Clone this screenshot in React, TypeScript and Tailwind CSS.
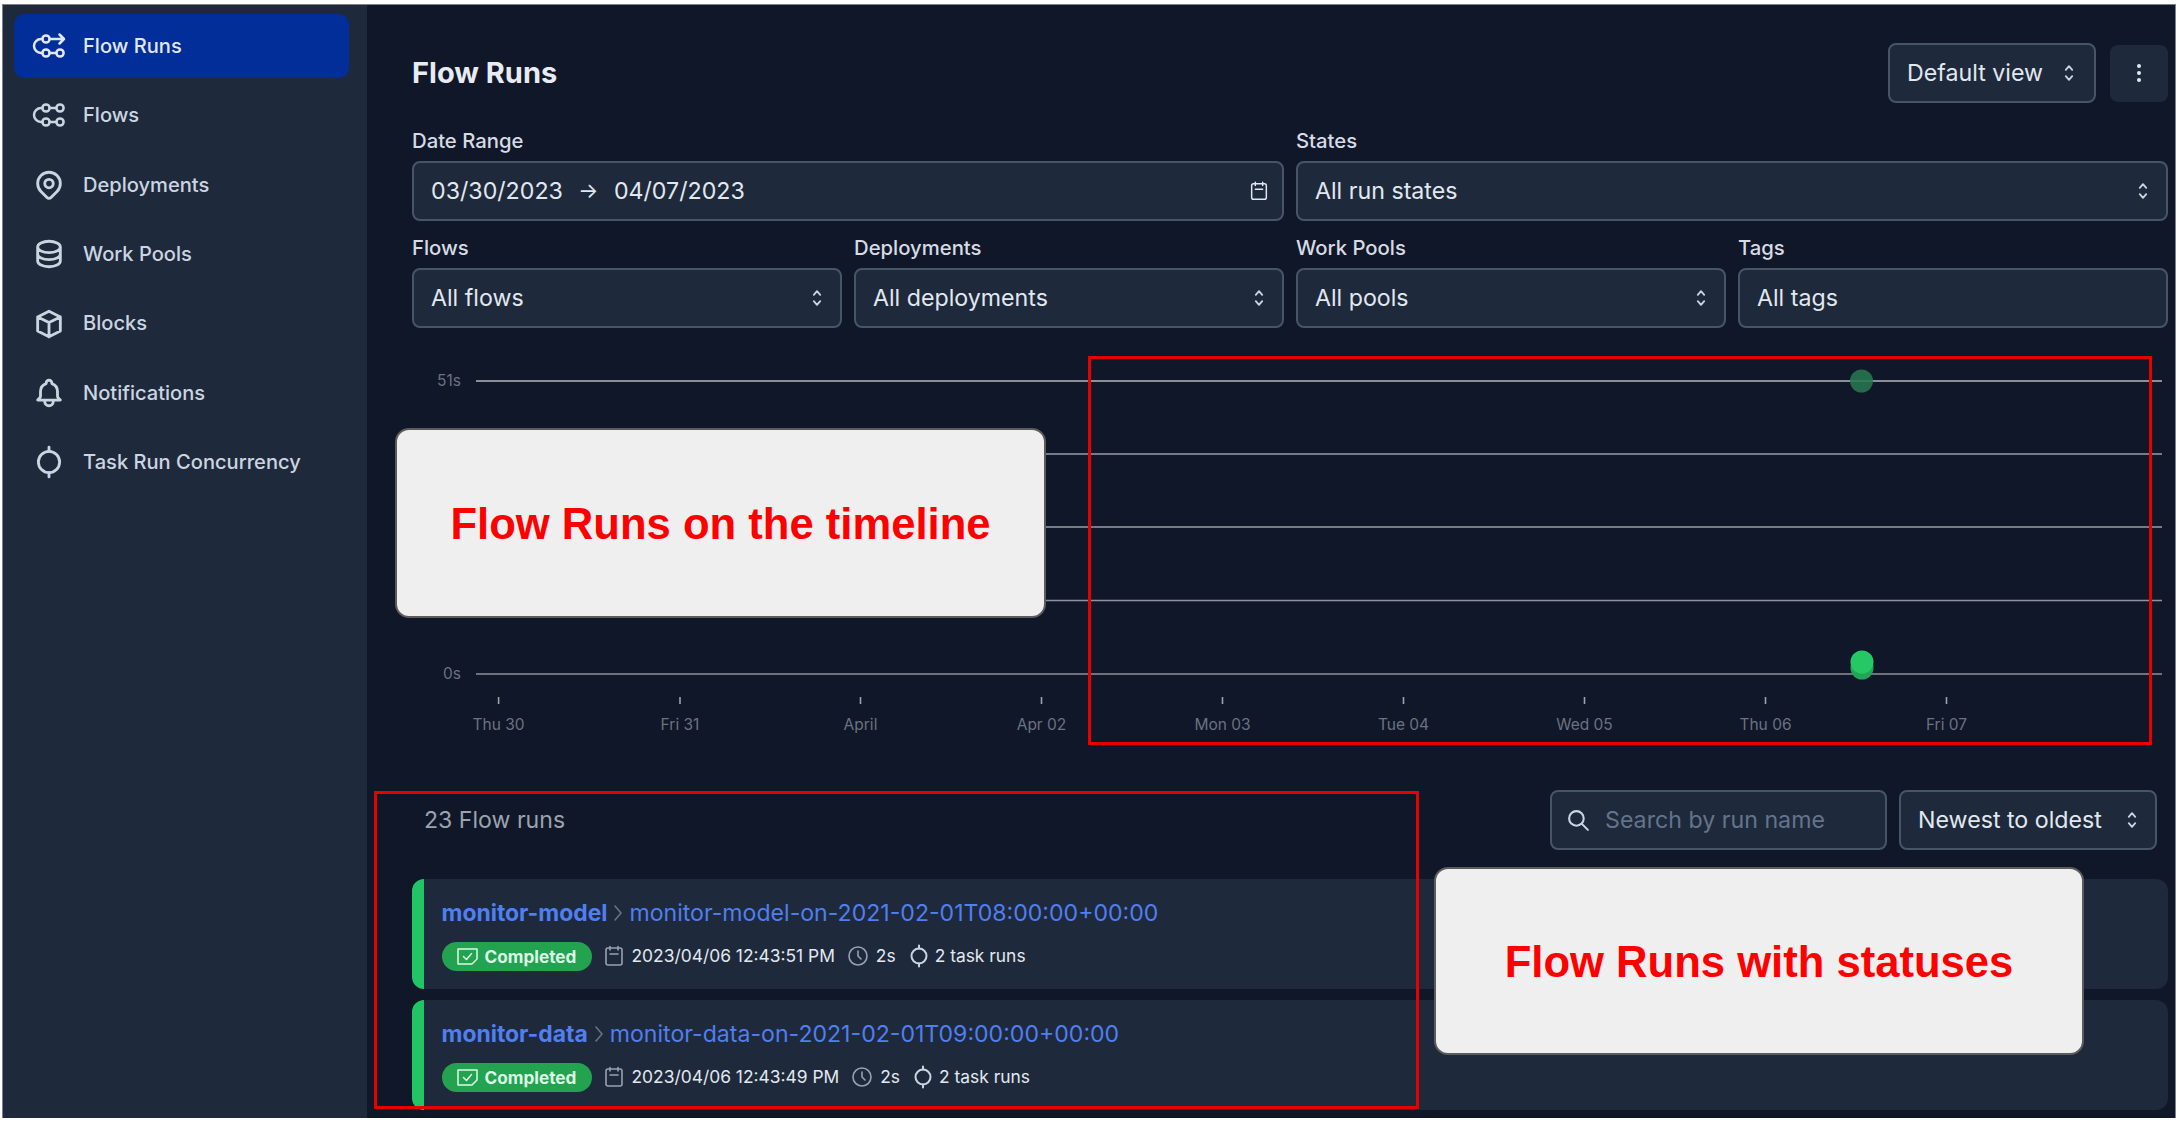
import React from "react";

type IconProps = { className?: string };
const Ic = ({ className, children, sw = 2 }: IconProps & { children: React.ReactNode; sw?: number }) => (
  <svg viewBox="0 0 24 24" fill="none" stroke="currentColor" strokeWidth={sw} strokeLinecap="round" strokeLinejoin="round" className={className}>
    {children}
  </svg>
);

const FlowRunsIcon = () => (
  <svg viewBox="0 0 34 32" fill="none" stroke="currentColor" strokeWidth="2.5" strokeLinecap="round" strokeLinejoin="round" className="w-[34px] h-[32px]">
    <circle cx="14" cy="9" r="3.6" />
    <circle cx="14" cy="23" r="3.6" />
    <circle cx="28" cy="23" r="3.6" />
    <path d="M17.6 23h6.8M17.6 9H32M27.5 4.5L32 9l-4.5 4.5M10.4 9H9a7 7 0 0 0 0 14h1.4" />
  </svg>
);
const FlowsIcon = () => (
  <svg viewBox="0 0 34 32" fill="none" stroke="currentColor" strokeWidth="2.5" strokeLinecap="round" strokeLinejoin="round" className="w-[34px] h-[32px]">
    <circle cx="14" cy="9" r="3.6" />
    <circle cx="28" cy="9" r="3.6" />
    <circle cx="14" cy="23" r="3.6" />
    <circle cx="28" cy="23" r="3.6" />
    <path d="M17.6 23h6.8M17.6 9h6.8M10.4 9H9a7 7 0 0 0 0 14h1.4" />
  </svg>
);
const PinIcon = () => (
  <Ic className="w-[34px] h-[34px]">
    <path d="M17.657 16.657L13.414 20.9a1.998 1.998 0 01-2.827 0l-4.244-4.243a8 8 0 1111.314 0z" />
    <path d="M15 11a3 3 0 11-6 0 3 3 0 016 0z" />
  </Ic>
);
const DbIcon = () => (
  <Ic className="w-[34px] h-[34px]">
    <path d="M4 7v10c0 2.21 3.582 4 8 4s8-1.79 8-4V7M4 7c0 2.21 3.582 4 8 4s8-1.79 8-4M4 7c0-2.21 3.582-4 8-4s8 1.79 8 4m0 5c0 2.21-3.582 4-8 4s-8-1.79-8-4" />
  </Ic>
);
const CubeIcon = () => (
  <Ic className="w-[34px] h-[34px]">
    <path d="M20 7l-8-4-8 4m16 0l-8 4m8-4v10l-8 4m0-10L4 7m8 4v10M4 7v10l8 4" />
  </Ic>
);
const BellIcon = () => (
  <Ic className="w-[34px] h-[34px]">
    <path d="M15 17h5l-1.405-1.405A2.032 2.032 0 0118 14.158V11a6.002 6.002 0 00-4-5.659V5a2 2 0 10-4 0v.341C7.67 6.165 6 8.388 6 11v3.159c0 .538-.214 1.055-.595 1.436L4 17h5m6 0v1a3 3 0 11-6 0v-1m6 0H9" />
  </Ic>
);
const ConcurrencyIcon = ({ className = "w-[34px] h-[34px]" }: IconProps) => (
  <Ic className={className}>
    <circle cx="12" cy="12" r="7.5" />
    <path d="M12 1.5v3M12 19.5v3" />
  </Ic>
);
const CalendarIcon = ({ className }: IconProps) => (
  <Ic className={className} sw={1.6}>
    <path d="M8 6V2.5M16 6V2.5M8 10h8M6 21h12a2 2 0 002-2V6a2 2 0 00-2-2H6a2 2 0 00-2 2v13a2 2 0 002 2z" />
  </Ic>
);
const ClockIcon = ({ className }: IconProps) => (
  <Ic className={className} sw={1.6}>
    <circle cx="12" cy="12" r="9" />
    <path d="M12 7v5l3 3" />
  </Ic>
);
const Selector = () => (
  <Ic className="w-[22px] h-[22px] text-[#cbd5e1] shrink-0" sw={2}>
    <path d="M8.5 8.5L12 4.5l3.5 4M15.5 15.5L12 19.5l-3.5-4" />
  </Ic>
);

const nav = [
  { label: "Flow Runs", icon: <FlowRunsIcon />, active: true },
  { label: "Flows", icon: <FlowsIcon /> },
  { label: "Deployments", icon: <PinIcon /> },
  { label: "Work Pools", icon: <DbIcon /> },
  { label: "Blocks", icon: <CubeIcon /> },
  { label: "Notifications", icon: <BellIcon /> },
  { label: "Task Run Concurrency", icon: <ConcurrencyIcon /> },
];

const Sidebar = () => (
  <aside className="w-[364px] shrink-0 bg-[#1e293b] pt-[9px] pl-[11px] pr-[18px] flex flex-col gap-[5.4px]">
    {nav.map((n) => (
      <div
        key={n.label}
        className={`h-[64px] rounded-[10px] flex items-center pl-[17px] gap-[16px] text-[20.1px] font-medium ${
          n.active ? "bg-[#012e98] text-[#e2e8f0]" : "text-[#cbd5e1]"
        }`}
      >
        <span className="w-[36px] h-[34px] flex items-center justify-center shrink-0">{n.icon}</span>
        <span>{n.label}</span>
      </div>
    ))}
  </aside>
);

const Box = ({ children, className = "" }: { children: React.ReactNode; className?: string }) => (
  <div className={`h-[60px] rounded-[8px] border-2 border-[#475569] bg-[#1e293b] flex items-center justify-between pl-[17px] pr-[12px] text-[23.2px] text-[#e2e8f0] ${className}`}>
    {children}
  </div>
);

const Field = ({ label, className = "", children }: { label: string; className?: string; children: React.ReactNode }) => (
  <div className={className}>
    <div className="h-[30px] mb-[5px] flex items-center text-[20.3px] font-medium text-[#d6dbe4]">{label}</div>
    {children}
  </div>
);

const xTicks = [
  ["Thu 30", 86.6],
  ["Fri 31", 268],
  ["April", 448.5],
  ["Apr 02", 629.5],
  ["Mon 03", 810.5],
  ["Tue 04", 991.5],
  ["Wed 05", 1172.5],
  ["Thu 06", 1353.5],
  ["Fri 07", 1534.5],
] as const;

const lines = [
  [41, "#b4b8be"],
  [114, "#9a9ea6"],
  [187, "#9a9ea6"],
  [260.5, "#8e929b"],
  [334, "#8e929b"],
] as const;

const Chart = () => (
  <svg width="1756" height="420" viewBox="0 0 1756 420" className="block mt-[12px]">
    {lines.map(([y, c]) => (
      <line key={y} x1="64" x2="1750" y1={y} y2={y} stroke={c} strokeWidth="1.6" />
    ))}
    <text x="49" y="46" textAnchor="end" fontSize="15.5" fill="#6b7280">51s</text>
    <text x="49" y="339" textAnchor="end" fontSize="15.5" fill="#6b7280">0s</text>
    {xTicks.map(([label, x]) => (
      <g key={label}>
        <line x1={x} x2={x} y1="357" y2="364" stroke="#9ca3af" strokeWidth="1.6" />
        <text x={x} y="390" textAnchor="middle" fontSize="15.5" fill="#6b7280">{label}</text>
      </g>
    ))}
    <circle cx="1449.5" cy="41" r="11.5" fill="#26784f" fillOpacity="0.88" />
    <circle cx="1450" cy="328" r="11.5" fill="#20a656" />
    <circle cx="1450" cy="322" r="11.5" fill="#26c866" />
  </svg>
);

const Badge = () => (
  <div className="h-[29px] w-[150px] rounded-full bg-[#23a24f] flex items-center pl-[15px] gap-[7px] text-[17.2px] font-bold text-[#dcfce7]">
    <svg viewBox="0 0 21 17" fill="none" stroke="currentColor" strokeWidth="1.5" strokeLinecap="round" strokeLinejoin="round" className="w-[21px] h-[17px] shrink-0">
      <path d="M1 1h19v10l-5 5H1z" />
      <path d="M6.5 8.5l3 3 5-6" />
    </svg>
    <span>Completed</span>
  </div>
);

const RunCard = ({ flow, run, time }: { flow: string; run: string; time: string }) => (
  <div className="h-[110px] rounded-[12px] bg-[#1e293b] border-l-[12px] border-[#22c566] pl-[17.5px] flex flex-col">
    <div className="h-[28px] mt-[20px] flex items-center text-[23.1px] text-[#4f7ff0]">
      <span className="font-bold text-[22.9px]">{flow}</span>
      <svg viewBox="0 0 10 20" fill="none" stroke="#64748b" strokeWidth="1.6" strokeLinecap="round" strokeLinejoin="round" className="w-[10px] h-[20px] mx-[6px] shrink-0">
        <path d="M2 3l6 7-6 7" />
      </svg>
      <span>{run}</span>
    </div>
    <div className="mt-[15px] flex items-center text-[17.4px] text-[#e2e8f0]">
      <Badge />
      <div className="flex items-center gap-[6px] ml-[10px]">
        <CalendarIcon className="w-[24px] h-[24px] text-[#94a3b8]" />
        <span>{time}</span>
      </div>
      <div className="flex items-center gap-[6px] ml-[11px]">
        <ClockIcon className="w-[24px] h-[24px] text-[#94a3b8]" />
        <span>2s</span>
      </div>
      <div className="flex items-center gap-[4px] ml-[11px]">
        <ConcurrencyIcon className="w-[24px] h-[24px] text-[#cbd5e1]" />
        <span>2 task runs</span>
      </div>
    </div>
  </div>
);

const Callout = ({ text, className }: { text: string; className: string }) => (
  <div className={`absolute bg-[#efefef] border-2 border-[#5c5c5c] rounded-[14px] flex items-center justify-center pt-[3px] text-[43.6px] font-bold text-[#ff0000] [font-family:'Liberation_Sans',Arial,sans-serif] ${className}`}>
    {text}
  </div>
);

export default function App() {
  return (
    <div className="relative w-[2182px] h-[1122px] overflow-hidden bg-white pt-[4px] pl-[2px] pr-[6px] pb-[4px] [font-family:Inter,sans-serif]">
      <div className="h-full flex border-t border-l border-r border-[#7d828a]">
        <Sidebar />
        <main className="flex-1 bg-[#101729] pl-[45px] pr-[7px] pt-[38px] min-w-0">
          <header className="h-[60px] flex items-center justify-between">
            <h1 className="text-[29px] font-bold text-[#e8ecf2]">Flow Runs</h1>
            <div className="flex items-center gap-[14px]">
              <Box className="w-[208px] pr-[14px]">
                <span>Default view</span>
                <Selector />
              </Box>
              <div className="w-[58px] h-[57px] rounded-[8px] bg-[#1e293b] flex flex-col items-center justify-center gap-[3px]">
                <span className="w-[4px] h-[4px] rounded-full bg-[#e2e8f0]" />
                <span className="w-[4px] h-[4px] rounded-full bg-[#e2e8f0]" />
                <span className="w-[4px] h-[4px] rounded-full bg-[#e2e8f0]" />
              </div>
            </div>
          </header>

          <div className="mt-[23px] grid grid-cols-4 gap-[12px]">
            <Field label="Date Range" className="col-span-2">
              <Box>
                <span className="flex items-center gap-[15.5px]">
                  <span>03/30/2023</span>
                  <span className="text-[21px]">→</span>
                  <span>04/07/2023</span>
                </span>
                <CalendarIcon className="w-[22px] h-[22px] text-[#e2e8f0]" />
              </Box>
            </Field>
            <Field label="States" className="col-span-2">
              <Box>
                <span>All run states</span>
                <Selector />
              </Box>
            </Field>
            <Field label="Flows">
              <Box>
                <span>All flows</span>
                <Selector />
              </Box>
            </Field>
            <Field label="Deployments">
              <Box>
                <span>All deployments</span>
                <Selector />
              </Box>
            </Field>
            <Field label="Work Pools">
              <Box>
                <span>All pools</span>
                <Selector />
              </Box>
            </Field>
            <Field label="Tags">
              <Box>
                <span>All tags</span>
              </Box>
            </Field>
          </div>

          <Chart />

          <div className="mt-[30px] h-[60px] flex items-center pl-[12px] pr-[11px]">
            <span className="text-[23.1px] text-[#9ca3af] flex-1">23 Flow runs</span>
            <Box className="w-[337px] justify-start! pl-[14px]! gap-[14px]">
              <Ic className="w-[25px] h-[25px] text-[#cbd5e1]">
                <path d="M21 21l-6-6m2-5a7 7 0 11-14 0 7 7 0 0114 0z" />
              </Ic>
              <span className="text-[#64748b]">Search by run name</span>
            </Box>
            <Box className="w-[258px] ml-[12px]">
              <span>Newest to oldest</span>
              <Selector />
            </Box>
          </div>

          <div className="mt-[29px] flex flex-col gap-[11px]">
            <RunCard flow="monitor-model" run="monitor-model-on-2021-02-01T08:00:00+00:00" time="2023/04/06 12:43:51 PM" />
            <RunCard flow="monitor-data" run="monitor-data-on-2021-02-01T09:00:00+00:00" time="2023/04/06 12:43:49 PM" />
          </div>
        </main>
      </div>

      <div className="absolute left-[1088px] top-[356px] w-[1064px] h-[389px] border-[3px] border-[#e60000] pointer-events-none" />
      <div className="absolute left-[374px] top-[791px] w-[1045px] h-[318px] border-[3px] border-[#e60000] pointer-events-none" />
      <Callout text="Flow Runs on the timeline" className="left-[395px] top-[428px] w-[651px] h-[190px]" />
      <Callout text="Flow Runs with statuses" className="left-[1434px] top-[867px] w-[650px] h-[188px]" />
    </div>
  );
}
